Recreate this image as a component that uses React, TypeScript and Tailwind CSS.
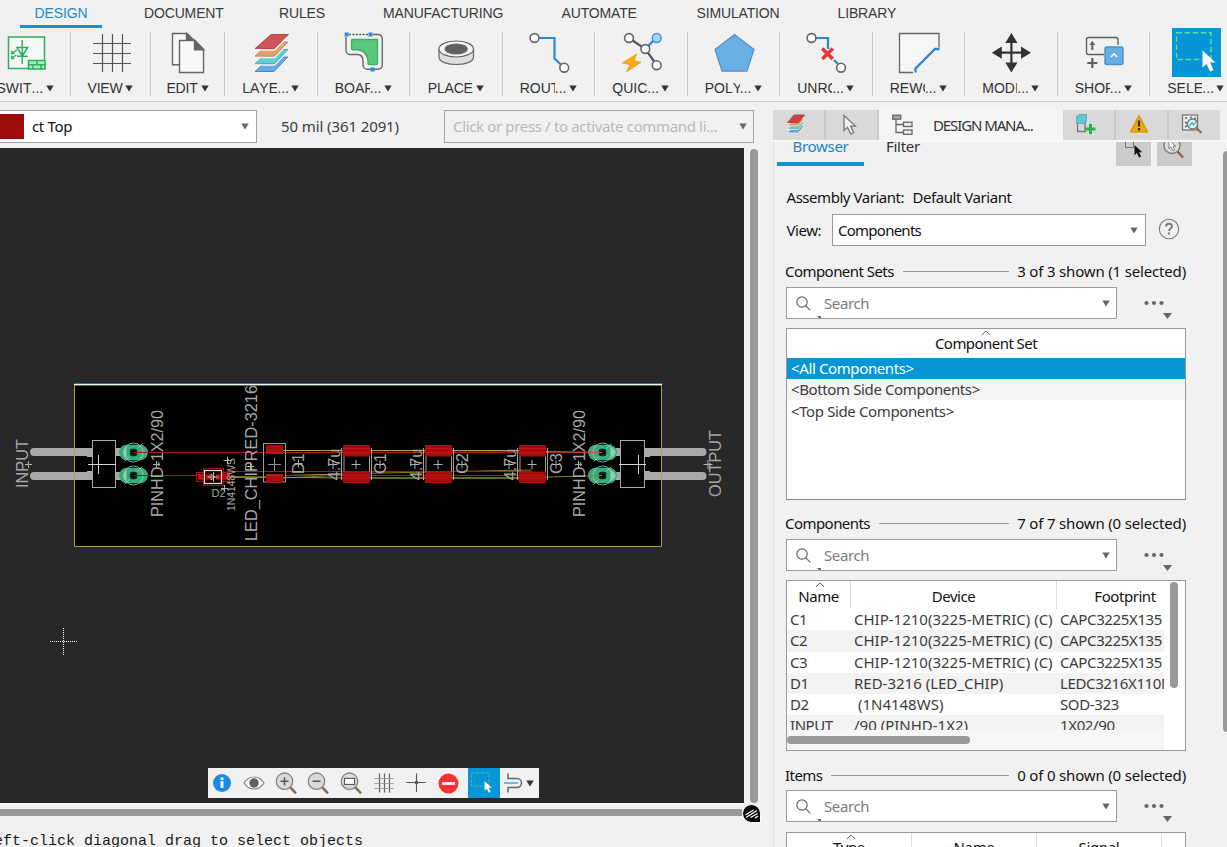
import React from "react";

const SANS = "font-['Noto_Sans','Open_Sans',sans-serif]";
const ARIAL = "font-['Liberation_Sans',Arial,sans-serif]";

function Caret({ className = "" }: { className?: string }) {
  return (
    <svg className={`shrink-0 ${className}`} width="8" height="7" viewBox="0 0 8 7">
      <path d="M0.3 0.5H7.7L4 6.6Z" fill="currentColor" />
    </svg>
  );
}

function Pointer({ x, y, s = 1, fill = "#fff", stroke = "none" }: { x: number; y: number; s?: number; fill?: string; stroke?: string }) {
  return (
    <path
      transform={`translate(${x} ${y}) scale(${s})`}
      d="M0 0V17L4 13.4L7.6 21L11 19.4L7.6 12H13Z"
      fill={fill}
      stroke={stroke}
      strokeWidth="1.5"
    />
  );
}

const ring = { fill: "#fff", stroke: "#666", strokeWidth: 1.6 };

const icons: Record<string, React.ReactNode> = {
  swit: (
    <g fill="none" stroke="#2bb05c" strokeWidth="1.5">
      <rect x="6.500" y="8" width="36" height="31.500" fill="#f4faf5" />
      <path d="M20.300 11V35M15 18.500H25.600L20.300 27ZM15 27.300H25.600" />
      <path d="M15 21L10 24.500M14.500 26L10 29" />
      <path d="M9.500 25V21.800L12.500 24.800ZM9.500 30V26.600L12.500 29.600Z" fill="#2bb05c" strokeWidth="0.800" />
      <rect x="26.500" y="31.500" width="16.500" height="8.500" fill="#a5efbd" />
      <path d="M26.500 35.700H43M35 31.500V35.700M31 35.700V40M39 35.700V40" />
    </g>
  ),
  view: <path d="M15.500 5V43M25.500 5V43M35.500 5V43M6 14.500H44M6 24.500H44M6 34.500H44" stroke="#555" strokeWidth="1.200" fill="none" />,
  edit: (
    <g fill="none" stroke="#666" strokeWidth="1.400">
      <path d="M15 35.800H8.500V4.500H23L28.500 10" fill="#f8f8f8" />
      <path d="M22.500 4.500V10.300H29Z" fill="#666" />
      <path d="M15.500 11.500H31L39.500 20.500V43.500H15.500Z" fill="#f8f8f8" />
      <path d="M30.500 11.500V20.800H39.800Z" fill="#666" />
    </g>
  ),
  laye: (
    <g strokeWidth="0.900">
      <path d="M24 28H41L27 42.500H8Z" fill="#64ace4" stroke="#3e83c0" />
      <path d="M24 20.500H41L27 34.800H8Z" fill="#62cfd6" stroke="#3aa3aa" />
      <path d="M6 33L10 29.500L12 27.200H27L41 13V17L27 31H8Z" fill="none" />
      <path d="M24 13H41L27 27.200H8Z" fill="#e9a06a" stroke="#c77a42" />
      <path d="M24 5.500H41.500L27 19.700H8Z" fill="#cb5557" stroke="#a84244" />
      <path d="M8 21H27.500L41.500 7M8 28.500H27.500L41.500 14.500M8 36H27.500L41.500 22" fill="none" stroke="#f1f1f1" strokeWidth="1.300" />
    </g>
  ),
  boar: (
    <g fill="none">
      <path d="M9 5.500H29" stroke="#555" strokeWidth="1.300" strokeDasharray="2 1.400" />
      <path d="M33 5.500H38A4.200 4.200 0 0 1 42.300 9.700V36A4.200 4.200 0 0 1 38 40.300H27.500A4.500 4.500 0 0 1 23 36V32C23 27.500 20.500 25.500 17 25.500H10A4 4 0 0 1 6 21.500V8" stroke="#666" strokeWidth="1.400" />
      <path d="M12 10.500H37.500V34.500Q37.500 35.500 36.500 35.500H29Q28 35.500 28 34.500V32Q27 21 17 20.700H12.500Q11.500 20.700 11.500 19.700V11Z" fill="#5ac77f" stroke="#3fae67" strokeWidth="1.400" />
      <path d="M4.600 3.600h4v4h-4zM28.500 3.600h4v4h-4zM30.600 38.600h4v4h-4z" fill="#2b8cdc" />
    </g>
  ),
  place: (
    <g stroke="#666" strokeWidth="1.200">
      <path d="M7 20V28C7 38 41.500 38 41.500 28V20Z" fill="#dedede" />
      <ellipse cx="24.200" cy="20" rx="17.300" ry="8" fill="#f7f7f7" />
      <ellipse cx="24.200" cy="20" rx="11" ry="5" fill="#606060" />
    </g>
  ),
  rout: (
    <g>
      <path d="M12 9H29.500V29.500L37 36.500" fill="none" stroke="#2b87d3" strokeWidth="2.200" />
      <circle cx="9.500" cy="9" r="4.400" {...ring} />
      <circle cx="39.200" cy="38.700" r="4.400" {...ring} />
    </g>
  ),
  quic: (
    <g>
      <path d="M12 9L28.300 20L39.700 36" stroke="#555" strokeWidth="2.200" fill="none" />
      <path d="M28.300 20L39 9" stroke="#2b87d3" strokeWidth="2.200" />
      <circle cx="12" cy="9" r="4.400" {...ring} />
      <circle cx="28.300" cy="20" r="4.400" {...ring} />
      <circle cx="39.700" cy="36.200" r="4.400" {...ring} />
      <circle cx="39.700" cy="9" r="4.400" fill="#a9d4f5" stroke="#3c93dc" strokeWidth="1.500" />
      <path d="M19.700 25L5.300 34L13 35.500L9.700 42.700L24 33.300L17 31.800Z" fill="#fbab13" stroke="#eb9a05" strokeWidth="0.800" />
    </g>
  ),
  poly: <path d="M24.500 5.500L44 20.500L37 42.200H12L5 20.500Z" fill="#68afe5" stroke="#5590c2" strokeWidth="1.200" />,
  unro: (
    <g>
      <path d="M12 9H26V20M32 31L37 36" fill="none" stroke="#2b87d3" strokeWidth="2.200" />
      <circle cx="9.500" cy="9" r="4.400" {...ring} />
      <circle cx="39" cy="38.700" r="4.400" {...ring} />
      <path d="M20.300 19.500L30.800 30M30.800 19.500L20.300 30" stroke="#e53935" strokeWidth="3.600" />
    </g>
  ),
  rewo: (
    <g fill="none">
      <path d="M18 43.500H4.500V4.500H44V18.500" stroke="#666" strokeWidth="1.300" fill="#f6f6f6" />
      <path d="M20.500 43.500V39.500L40 20H44.500" stroke="#2b87d3" strokeWidth="2.300" />
    </g>
  ),
  modi: (
    <g fill="#333">
      <path d="M24.400 4L30.500 14H18.300ZM24.400 43.500L30.500 33.500H18.300ZM4.800 23.700L14.800 17.600V29.800ZM44 23.700L34 17.600V29.800Z" />
      <path d="M24.400 10V38M10 23.700H38" stroke="#333" strokeWidth="2.200" />
    </g>
  ),
  shop: (
    <g fill="none" stroke="#606060" strokeWidth="1.400">
      <path d="M24 25.500H8.500A2 2 0 0 1 6.500 23.500V10.500A2 2 0 0 1 8.500 8.500H36A2 2 0 0 1 38 10.500V16" />
      <path d="M12.300 21V15" strokeWidth="2" />
      <path d="M12.300 11.800L15.200 16H9.400Z" fill="#606060" stroke="none" />
      <path d="M12.300 29V39M7.300 34H17.300" strokeWidth="2.200" />
      <rect x="25" y="18" width="18" height="17.500" rx="2" fill="#66aee6" stroke="#4b8fcb" />
      <path d="M31 28L34 24.800L37 28" stroke="#fff" strokeWidth="1.600" />
    </g>
  ),
  sele: (
    <g>
      <rect width="49" height="49" fill="#0696d7" />
      <rect x="4.500" y="4.800" width="34.500" height="26.700" fill="none" stroke="#5ee09a" strokeWidth="1.400" strokeDasharray="5.500 2.600" />
      <Pointer x={30.500} y={22.500} />
    </g>
  ),
};

const tools: [string, string, boolean, string][] = [
  ["swit", "SWITC", true, "w-[71px] pr-[20px]"],
  ["view", "VIEW", false, "w-[80px]"],
  ["edit", "EDIT", false, "w-[74px]"],
  ["laye", "LAYE", true, "w-[92.5px]"],
  ["boar", "BOAR", true, "w-[92.5px]"],
  ["place", "PLACE", false, "w-[92.5px]"],
  ["rout", "ROUT", true, "w-[92.5px]"],
  ["quic", "QUIC", true, "w-[92.5px]"],
  ["poly", "POLY", true, "w-[92.5px]"],
  ["unro", "UNRO", true, "w-[92.5px]"],
  ["rewo", "REWO", true, "w-[92.5px]"],
  ["modi", "MODI", true, "w-[92.5px]"],
  ["shop", "SHOP", true, "w-[92.5px]"],
  ["sele", "SELE", true, "w-[92.5px]"],
];

function Tool({ id, label, cut, width }: { id: string; label: string; cut: boolean; width: string }) {
  const last = id === "sele";
  return (
    <div className={`flex h-[64px] shrink-0 flex-col items-center ${width} ${last ? "" : "border-r border-[#cbcbcb]"}`}>
      {last ? (
        <svg className="-mt-[4px] shrink-0" width="49" height="49" viewBox="0 0 49 49">
          {icons[id]}
        </svg>
      ) : (
        <svg className="-mt-[3px] ml-[1px] shrink-0" width="48" height="48" viewBox="0 0 48 48">
          {icons[id]}
        </svg>
      )}
      <div className={`mt-[1px] flex h-[20px] items-center text-[14px] text-[#333] [font-kerning:none] ${last ? "-ml-[1px]" : ""}`}>
        {cut ? (
          <>
            <span className="w-[35px] overflow-hidden whitespace-nowrap">{label}</span>
            <span className="w-[14px]">...</span>
          </>
        ) : (
          <span className="mr-[3px] tracking-[-0.2px]">{label}</span>
        )}
        <Caret className="text-[#333]" />
      </div>
    </div>
  );
}

const tabs: [string, string][] = [
  ["DOCUMENT", "w-[79px] ml-[42px]"],
  ["RULES", "w-[46px] ml-[56px]"],
  ["MANUFACTURING", "w-[120px] ml-[58px]"],
  ["AUTOMATE", "w-[75px] ml-[58.5px]"],
  ["SIMULATION", "w-[83px] ml-[60px]"],
  ["LIBRARY", "w-[60px] ml-[58px]"],
];

function VText({ x, y, len, size = 17, children }: { x: number; y: number; len: number; size?: number; children: string }) {
  return (
    <text transform={`translate(${x} ${y}) rotate(-90)`} fontSize={size} textLength={len} lengthAdjust="spacingAndGlyphs" fill="#a6a6a6">
      {children}
    </text>
  );
}

function Cross({ x, y, r = 4.5, c = "#b0b0b0" }: { x: number; y: number; r?: number; c?: string }) {
  return <path d={`M${x - r} ${y}H${x + r}M${x} ${y - r}V${y + r}`} stroke={c} strokeWidth="1" />;
}

function PadHole({ x, y, side }: { x: number; y: number; side: 1 | -1 }) {
  return (
    <g>
      <rect x={x - 14.500} y={y - 7.800} width="29" height="15.600" rx="7.800" fill="#35ad7d" />
      <path d={side === 1 ? `M${x - 9} ${y - 4}Q${x - 12} ${y} ${x - 9} ${y + 4}L${x - 7} ${y + 6}V${y - 6}Z` : `M${x + 8} ${y - 6}L${x + 12} ${y - 3}Q${x + 14} ${y} ${x + 12} ${y + 3}L${x + 8} ${y + 6}Z`} fill="#8fcdb2" />
      <circle cx={x} cy={y} r="9.500" fill="none" stroke="#a5c9ba" strokeWidth="0.800" />
      <rect x={x - 3.800} y={y - 3.800} width="7.600" height="7.600" rx="2.500" fill="#0d2a20" />
      <circle cx={x} cy={y} r="2.300" fill="#050505" />
      <path d={`M${x - 9} ${y + 9}L${x - 4} ${y + 4}M${x + 4} ${y - 4}L${x + 9} ${y - 9}`} stroke="#9bc9b6" strokeWidth="0.800" />
    </g>
  );
}

function Cap({ x }: { x: number }) {
  return (
    <g>
      <path d={`M${x - 15} 448V480M${x + 15} 448V480M${x - 12.500} 456V472M${x + 13} 456V472`} stroke="#b5b5a8" strokeWidth="0.900" />
      <rect x={x - 13.500} y="445" width="27" height="11.500" fill="#a80c0e" />
      <rect x={x - 13.500} y="471.500" width="27" height="11.500" fill="#a80c0e" />
      <path d={`M${x - 13.500} 448.500H${x + 13.500}M${x - 13.500} 452.500H${x + 13.500}M${x - 13.500} 475.500H${x + 13.500}M${x - 13.500} 478H${x + 13.500}`} stroke="#d01a1a" strokeWidth="0.700" />
      <Cross x={x - 0.500} y={464.500} />
    </g>
  );
}

function Board() {
  return (
    <svg className="block" width="744" height="655" viewBox="0 148 744 655" fontFamily="'Liberation Sans', Arial, sans-serif">
      <rect x="74.500" y="384.500" width="587" height="162" fill="#000" />
      <g stroke="#a9a9a9" strokeWidth="8" strokeLinecap="round">
        <path d="M34 452H124M34 476H124M612 452H702.500M612 476H702.500" />
      </g>
      <path d="M74.500 385V546.500H661.500V385" fill="none" stroke="#b39c50" />
      <path d="M74 383.500H662.500" stroke="#4468b4" />
      <path d="M74 384.500H662" stroke="#eef6f4" />
      <path d="M75 385.500H661" stroke="#6d8f6d" strokeWidth="0.800" />
      <rect x="92.500" y="440.500" width="23" height="47" fill="#000" stroke="#a9a9a9" />
      <rect x="620.500" y="440.500" width="24" height="47" fill="#000" stroke="#a9a9a9" />
      <path d="M87 456.500H93M87 471.500H93M644 456.500H650M644 471.500H650" stroke="#a9a9a9" />
      <path d="M88 464.500H116M98.500 455V474M619 464.500H646M638.500 455V474" stroke="#d5d5d5" />
      <PadHole x={133.500} y={452.500} side={1} />
      <PadHole x={133.500} y={475.500} side={1} />
      <PadHole x={602.500} y={452.500} side={-1} />
      <PadHole x={602.500} y={475.500} side={-1} />
      <g fill="none" strokeWidth="1">
        <path d="M275 450.500L520 451M356 478H520M283 478L356 474.500" stroke="#77752c" />
        <path d="M283 450.500H341M372 450.500H425M452 450.500H519" stroke="#a8a04a" />
        <path d="M222 476.500L343 478H519" stroke="#9a982a" />
        <path d="M230 477.500H275M356 473.500L532 470M532 477.500L602 475.500" stroke="#85821f" />
        <path d="M285 475.500L343 474" stroke="#d07a30" />
        <path d="M133.500 452.500H602M133.500 475.500H213L228 471.500H532M285 475.500H519" stroke="#a51a1a" />
        <path d="M546 451.500L602 452.500" stroke="#c86030" />
      </g>
      <rect x="263.500" y="443.500" width="22" height="38.500" fill="none" stroke="#9a9a9a" />
      <rect x="266" y="445" width="17" height="9" fill="#a80c0e" />
      <rect x="266" y="474" width="17" height="9" fill="#a80c0e" />
      <path d="M266 452.500H283M266 475.500H283" stroke="#d22" strokeWidth="0.800" />
      <Cross x={274.500} y={464.500} r={6.500} c="#909090" />
      <Cap x={356.500} />
      <Cap x={438.500} />
      <Cap x={532.500} />
      <rect x="196.500" y="472.500" width="8" height="9" fill="#300" stroke="#b01010" />
      <rect x="221.500" y="472.500" width="8" height="9" fill="#300" stroke="#b01010" />
      <rect x="203.500" y="468.500" width="20" height="17" fill="none" stroke="#a01010" />
      <rect x="198" y="474" width="31" height="5.500" fill="#b80d0d" />
      <rect x="204.500" y="470.500" width="17" height="13" fill="#180000" stroke="#eadada" strokeWidth="1.200" />
      <path d="M199 476.800H204M205.500 477H210M216 477H221" stroke="#c01414" strokeWidth="5" />
      <path d="M208 477H218M213.500 472V482M211 474V480L215 477Z" stroke="#f0c0b0" fill="none" strokeWidth="0.900" />
      <VText x={28.300} y={488} len={49}>INPUT</VText>
      <VText x={163} y={517} len={107}>PINHD-1X2/90</VText>
      <VText x={257} y={541} len={156}>LED_CHIPRED-3216</VText>
      <VText x={304} y={474} len={21}>D1</VText>
      <VText x={340} y={480.500} len={32}>4.7u</VText>
      <VText x={386} y={474} len={21}>C1</VText>
      <VText x={421.500} y={480.500} len={32}>4.7u</VText>
      <VText x={468} y={474} len={21}>C2</VText>
      <VText x={515.500} y={480.500} len={32}>4.7u</VText>
      <VText x={562} y={474} len={21}>C3</VText>
      <VText x={585} y={517} len={107}>PINHD-1X2/90</VText>
      <VText x={721} y={497} len={67}>OUTPUT</VText>
      <VText x={235} y={511} size={11} len={53}>1N4148WS</VText>
      <text x="211.500" y="497" fontSize="11" textLength="14" fill="#a6a6a6">D2</text>
      <g>
        <Cross x={28.500} y={464.500} r={3.500} />
        <Cross x={156.500} y={464.500} r={3.500} />
        <Cross x={250.500} y={466.500} r={3.500} />
        <Cross x={298.500} y={463.500} r={4} />
        <Cross x={333} y={464.500} r={4.500} />
        <Cross x={380} y={464.500} r={4} />
        <Cross x={415} y={464.500} r={4.500} />
        <Cross x={462} y={464.500} r={4} />
        <Cross x={509} y={464.500} r={4.500} />
        <Cross x={556} y={464.500} r={4} />
        <Cross x={578.500} y={464.500} r={3.500} />
        <Cross x={708} y={464.500} r={4.500} />
        <Cross x={227.500} y={460.500} r={4} />
        <Cross x={224.500} y={488.500} r={3.500} />
      </g>
      <path d="M50 641.500H77M63.500 628V655" stroke="#fff" strokeDasharray="1 1" />
    </svg>
  );
}

function Lens({ children }: { children?: React.ReactNode }) {
  return (
    <svg className="-ml-[3px] -mt-[1px]" width="24" height="24" viewBox="0 0 24 24">
      <path d="M16 16L22 22.300" stroke="#84694a" strokeWidth="2.400" />
      <circle cx="10.500" cy="10.200" r="8.200" fill="#dadada" stroke="#858585" strokeWidth="1.300" />
      <g stroke="#555" fill="none" strokeWidth="1.500">{children}</g>
    </svg>
  );
}

function ViewBar() {
  return (
    <div className="absolute left-[208px] top-[620px] flex h-[30px] w-[331px] items-center bg-[#f1f1f1]">
      <div className="flex w-[28px] justify-center">
        <svg width="20" height="20" viewBox="0 0 20 20">
          <circle cx="10" cy="10" r="9" fill="#1a8be3" />
          <path d="M8.600 8.300H11.400V15H8.600ZM8.600 4.500H11.400V7H8.600Z" fill="#fff" />
        </svg>
      </div>
      <div className="flex w-[36px] justify-center">
        <svg width="22" height="16" viewBox="0 0 22 16">
          <path d="M1 8C6 0 16 0 21 8C16 16 6 16 1 8Z" fill="#fafafa" stroke="#888" strokeWidth="1.200" />
          <circle cx="11" cy="8" r="4.700" fill="#606060" />
        </svg>
      </div>
      <div className="flex w-[31px] justify-center"><Lens><path d="M6.500 10.200H14.500M10.500 6.200V14.200" /></Lens></div>
      <div className="flex w-[33px] justify-center"><Lens><path d="M6.500 10.200H14.500" /></Lens></div>
      <div className="flex w-[32px] justify-center"><Lens><rect x="5.500" y="7.400" width="10" height="6" strokeWidth="1.100" fill="#fff" /></Lens></div>
      <div className="flex w-[32px] justify-center">
        <svg width="20" height="20" viewBox="0 0 20 20" stroke="#606060" fill="none">
          <path d="M5.500 0.500V19.500M10.500 0.500V19.500M15.500 0.500V19.500" strokeWidth="1.200" />
          <path d="M0.500 5.500H19.500M0.500 10.500H19.500M0.500 15.500H19.500" strokeWidth="0.900" stroke="#999" />
        </svg>
      </div>
      <div className="flex w-[32px] justify-center">
        <svg width="20" height="20" viewBox="0 0 20 20" stroke="#555" fill="none">
          <path d="M0.500 9.500H8M13 9.500H19.500M10.500 0.500V7M10.500 12V19" strokeWidth="1.100" />
          <path d="M8 9.500H13M10.500 7V12" strokeWidth="1" />
          <rect x="9.500" y="8.500" width="2" height="2" fill="#555" />
        </svg>
      </div>
      <div className="flex w-[36px] justify-center pr-[3px]">
        <svg width="21" height="21" viewBox="0 0 21 21">
          <circle cx="10.500" cy="10.500" r="10" fill="#fc3033" />
          <path d="M4 10.500H17" stroke="#fff" strokeWidth="2.800" />
        </svg>
      </div>
      <svg className="shrink-0" width="32" height="30" viewBox="0 0 32 30">
        <rect width="32" height="30" fill="#0696d7" />
        <rect x="3.500" y="5" width="17.500" height="13" fill="none" stroke="#4bbd9c" strokeDasharray="3 1.700" />
        <Pointer x={16.500} y={13} s={0.560} />
      </svg>
      <svg className="ml-[4px] shrink-0" width="20" height="22" viewBox="0 0 20 22" fill="none">
        <path d="M4 1.500V6.500H13A4.500 4.500 0 0 1 13 15.500H4V20.500" stroke="#666" strokeWidth="1.500" />
        <path d="M0 11H14" stroke="#4b9fe4" strokeWidth="1.500" />
      </svg>
      <Caret className="ml-[2px] text-[#333]" />
    </div>
  );
}

function Section({ title, count, top }: { title: string; count: string; top: string }) {
  return (
    <div className={`-ml-px flex h-[20px] w-[401px] items-center text-[15px] text-[#111] ${top}`}>
      <span className="tracking-[-0.55px]">{title}</span>
      <span className="ml-[9px] mr-[8px] h-px grow bg-[#9a9a9a]" />
      <span className="tracking-[-0.17px]">{count}</span>
    </div>
  );
}

function SearchRow({ top }: { top: string }) {
  return (
    <div className={`flex h-[32px] ${top}`}>
      <div className="flex w-[331px] items-center border border-[#9c9c9c] bg-white pl-[9px] pr-[6px]">
        <svg width="15" height="15" viewBox="0 0 15 15" fill="none" stroke="#666" strokeWidth="1.200">
          <circle cx="6" cy="6" r="5.200" />
          <path d="M9.700 9.700L14.300 14.300" />
        </svg>
        <div className="flex h-full flex-col justify-end pl-[6px]">
          <svg width="4" height="3" viewBox="0 0 4 3"><path d="M0 1H4V3H2Z" fill="#666" /></svg>
        </div>
        <span className="ml-[3px] grow text-[15px] tracking-[-0.4px] text-[#7c7c7c]">Search</span>
        <Caret className="text-[#666]" />
      </div>
      <svg className="ml-[27px] mt-[11px]" width="28" height="22" viewBox="0 0 28 22" fill="#666">
        <circle cx="2.500" cy="5" r="2.100" />
        <circle cx="10" cy="5" r="2.100" />
        <circle cx="17.500" cy="5" r="2.100" />
        <path d="M19 15H28L23.500 21Z" />
      </svg>
    </div>
  );
}

function SortMark({ left }: { left: string }) {
  return (
    <svg className={`absolute top-[1px] ${left}`} width="10" height="6" viewBox="0 0 10 6">
      <path d="M0.800 5L5 1L9.200 5" fill="none" stroke="#666" />
    </svg>
  );
}

const parts = [
  ["C1", "CHIP-1210(3225-METRIC) (C)", "CAPC3225X135"],
  ["C2", "CHIP-1210(3225-METRIC) (C)", "CAPC3225X135"],
  ["C3", "CHIP-1210(3225-METRIC) (C)", "CAPC3225X135"],
  ["D1", "RED-3216 (LED_CHIP)", "LEDC3216X110N"],
  ["D2", "\u00a0(1N4148WS)", "SOD-323"],
  ["INPUT", "/90 (PINHD-1X2)", "1X02/90"],
];

function Panel() {
  return (
    <div className={`flex w-[454px] flex-col ${SANS}`}>
      <div className="mt-[8px] flex h-[30px] w-[447px] shrink-0 bg-[#cacaca]">
        <div className="flex w-[51px] items-center justify-center bg-[#d9d9d9]">
          <svg className="-ml-[5px] -mt-[3px]" width="22" height="22" viewBox="0 0 22 22" strokeWidth="0.800">
            <path d="M9 12H19.500L13.500 20H2.500Z" fill="#62a5dc" stroke="#eee" />
            <path d="M9 9H19.500L13.500 16.500H2.500Z" fill="#60c4ca" stroke="#eee" />
            <path d="M9 5.500H19.500L13.500 13H2.500Z" fill="#e39a66" stroke="#eee" />
            <path d="M9 2H19.500L13.500 9.500H2.500Z" fill="#c94448" stroke="#a83a3d" />
          </svg>
        </div>
        <div className="ml-[2px] flex w-[51px] items-center justify-center bg-[#d9d9d9]">
          <svg className="-ml-[4px]" width="16" height="22" viewBox="0 0 16 22">
            <Pointer x={2} y={1.500} s={0.880} fill="#f2f2f2" stroke="#777" />
          </svg>
        </div>
        <div className="ml-[2px] flex w-[184px] items-center bg-[#f5f5f5] pl-[13px]">
          <svg className="-mt-[2px]" width="21" height="21" viewBox="0 0 21 21" fill="#ededed" stroke="#666" strokeWidth="1.300">
            <path d="M4 5.500V18.500H12M4 10.500H12" fill="none" />
            <rect x="0.700" y="1.200" width="8" height="4" fill="#aaa" />
            <rect x="11.500" y="8.200" width="8.500" height="4.300" />
            <rect x="11.500" y="16" width="8.500" height="4.300" />
          </svg>
          <span className="ml-[20px] whitespace-nowrap text-[15px] tracking-[-1.1px] text-[#333]">DESIGN MANA...</span>
        </div>
        <div className="flex w-[51px] items-center justify-center bg-[#d9d9d9]">
          <svg className="-ml-[5px] -mt-[2px]" width="22" height="22" viewBox="0 0 22 22">
            <path d="M2.500 10V18.500H11M10 3V19" fill="none" stroke="#777" strokeWidth="1.300" />
            <path d="M1.500 4L4 1.500H11.500V8L9 10.500H1.500Z" fill="#5fc8d2" stroke="#4a9fa8" strokeWidth="0.700" />
            <path d="M15.500 11V21M10.500 16H20.500" stroke="#2ab04a" strokeWidth="3" />
          </svg>
        </div>
        <div className="ml-[2px] flex w-[51px] items-center justify-center bg-[#d9d9d9]">
          <svg className="-ml-[5px] -mt-[2px]" width="20" height="20" viewBox="0 0 20 20">
            <path d="M10 2L18.500 18H1.500Z" fill="#eba90c" stroke="#dd9c0a" strokeWidth="1.600" strokeLinejoin="round" />
            <path d="M10 6.500V12.500M10 14V16.500" stroke="#333" strokeWidth="2.200" />
          </svg>
        </div>
        <div className="ml-[2px] flex w-[51px] items-center justify-center bg-[#d9d9d9]">
          <svg className="-ml-[6px] -mt-[2px]" width="22" height="22" viewBox="0 0 22 22" fill="none" stroke="#777">
            <rect x="1.500" y="2" width="15" height="15" fill="#eee" strokeWidth="1.300" />
            <path d="M4 5h2M4 9l3 2M4 14l3-2M9 4.500h2M14 4.500v3" strokeWidth="2" />
            <path d="M15.500 15L20.500 20" stroke="#8c7355" strokeWidth="2.200" />
            <circle cx="11.500" cy="11" r="5" fill="#e3f3f0" strokeWidth="1.300" />
            <path d="M8.500 12.500L11 9.500L12.500 12L14.500 9" stroke="#35a99a" strokeWidth="1.200" />
          </svg>
        </div>
      </div>
      <div className="h-[2px] shrink-0 bg-[#f8f8f8]" />
      <div className="flex min-h-0 grow justify-between border-l border-[#e2e2e2]">
        <div className="flex w-[420px] flex-col overflow-hidden pl-[12px]">
          <div className="-ml-[9px] flex h-[24px] shrink-0 overflow-hidden text-[15px] tracking-[-0.3px]">
            <div className="h-[24px] w-[87px] overflow-hidden border-b-[4px] border-[#1391d2] text-center text-[#1a87c4]">
              <div className="-mt-[6px] leading-[20px]">Browser</div>
            </div>
            <div className="-mt-[6px] ml-[22px] w-[230px] leading-[20px] text-[#333]">Filter</div>
            <svg className="block" width="77" height="24" viewBox="0 0 77 24">
              <rect width="35" height="24" fill="#cbcbcb" />
              <rect x="41" width="35" height="24" fill="#cbcbcb" />
              <path d="M9.500 0V5.500H17.500V0" fill="none" stroke="#777" />
              <Pointer x={18.500} y={3} s={0.600} fill="#111" />
              <path d="M61 9L67 15.500" stroke="#84694a" strokeWidth="2.400" />
              <circle cx="56" cy="3.500" r="8" fill="#ddd" stroke="#777" strokeWidth="1.300" />
              <Pointer x={53} y={-2} s={0.520} fill="#fff" stroke="#666" />
            </svg>
          </div>
          <div className="mt-[21px] flex h-[20px] shrink-0 items-center pl-[0.500px] text-[15px] tracking-[-0.46px] text-[#111]">
            <span>Assembly Variant:</span>
            <span className="ml-[8.500px]">Default Variant</span>
          </div>
          <div className="mt-[7px] flex h-[32px] shrink-0 items-center text-[15px] tracking-[-0.45px] text-[#111]">
            <span className="w-[46px] pl-[0.500px]">View:</span>
            <div className="flex h-[32px] w-[314px] items-center justify-between border border-[#999] bg-white pl-[5px] pr-[7px]">
              <span className="tracking-[-0.750px]">Components</span>
              <Caret className="text-[#666]" />
            </div>
            <svg className="-mt-[2px] ml-[12px]" width="22" height="22" viewBox="0 0 22 22">
              <circle cx="11" cy="11" r="9.700" fill="none" stroke="#777" strokeWidth="1.100" />
              <path d="M8 8.500C8 4.800 14 4.800 14 8.300C14 10.500 11 10.500 11 13M11 14.500V16.500" fill="none" stroke="#777" strokeWidth="1.900" />
            </svg>
          </div>
          <div className="flex flex-col">
            <Section title="Component Sets" count="3 of 3 shown (1 selected)" top="mt-[15px]" />
            <SearchRow top="mt-[6px]" />
            <div className="relative mt-[9px] h-[172px] w-[400px] border border-[#999] border-b-[#888] bg-white text-[15px] tracking-[-0.38px] text-[#3c3c3c]">
              <SortMark left="left-[194px]" />
              <div className="h-[29px] text-center leading-[29px] tracking-[-0.55px] text-[#111]">Component Set</div>
              <div className="h-[21px] bg-[#0696d7] pl-[4px] leading-[21px] text-white">&lt;All Components&gt;</div>
              <div className="h-[21px] bg-[#f4f4f4] pl-[4px] leading-[21px]">&lt;Bottom Side Components&gt;</div>
              <div className="h-[21px] pl-[4px] leading-[23px]">&lt;Top Side Components&gt;</div>
            </div>
            <Section title="Components" count="7 of 7 shown (0 selected)" top="mt-[13px]" />
            <SearchRow top="mt-[6px]" />
            <div className="relative mt-[9px] flex h-[171px] w-[400px] flex-col border border-[#999] bg-white text-[15px] tracking-[-0.45px] text-[#3c3c3c]">
              <SortMark left="left-[28px]" />
              <div className="flex">
                <div className="h-[149px] w-[377px] overflow-hidden">
                  <div className="flex h-[28px] w-[420px] text-center leading-[30px] text-[#111]">
                    <div className="w-[64px] border-r border-[#ddd]">Name</div>
                    <div className="w-[206px] border-r border-[#ddd]">Device</div>
                    <div className="w-[136px]">Footprint</div>
                  </div>
                  {parts.map((p, i) => (
                    <div key={p[0]} className={`flex h-[21.300px] w-[420px] whitespace-nowrap leading-[21px] ${i % 2 ? "bg-[#f3f3f3]" : "bg-white"}`}>
                      <div className="w-[67px] pl-[3px]">{p[0]}</div>
                      <div className="w-[206px] tracking-[0px]">{p[1]}</div>
                      <div className="w-[140px] tracking-[-0.370px]">{p[2]}</div>
                    </div>
                  ))}
                </div>
                <div className="ml-[6px] mt-[1px] h-[106px] w-[8px] rounded-[4px] bg-[#999]" />
              </div>
              <div className="flex h-[20px] w-[377px] items-center bg-[#f6f6f6]">
                <div className="h-[8px] w-[183px] rounded-[4px] bg-[#999]" />
              </div>
            </div>
            <Section title="Items" count="0 of 0 shown (0 selected)" top="mt-[14px]" />
            <SearchRow top="mt-[5px]" />
            <div className="relative mt-[10px] flex h-[40px] w-[400px] shrink-0 border border-[#999] bg-white text-center text-[15px] leading-[28px] tracking-[-0.35px] text-[#111]">
              <SortMark left="left-[59px]" />
              <div className="w-[125px] border-r border-[#ddd]">Type</div>
              <div className="w-[125px] border-r border-[#ddd]">Name</div>
              <div className="w-[125px] border-r border-[#ddd]">Signal</div>
            </div>
          </div>
        </div>
        <div className="mt-[9px] h-[581px] w-[4px] rounded-l-[4px] bg-[#999]" />
      </div>
    </div>
  );
}

export default function App() {
  return (
    <div className={`flex h-[847px] w-[1227px] flex-col overflow-hidden bg-[#f1f1f1] ${ARIAL}`}>
      <div className="flex h-[28px] shrink-0 text-[14px] leading-[27px] tracking-[-0.15px] text-[#3a3a3a]">
        <div className="ml-[20px] h-[28px] w-[82px] border-b-[3px] border-[#1391d2] text-center text-[#1a8bc9]">DESIGN</div>
        {tabs.map(([label, cls]) => (
          <div key={label} className={`whitespace-nowrap ${cls}`}>{label}</div>
        ))}
      </div>
      <div className="flex h-[74px] shrink-0 overflow-hidden border-b border-[#c9c9c9] pt-[4px]">
        {tools.map(([id, label, cut, width]) => (
          <Tool key={id} id={id} label={label} cut={cut} width={width} />
        ))}
      </div>
      <div className="flex min-h-0 grow">
        <div className="flex w-[773px] flex-col">
          <div className={`flex h-[46px] shrink-0 pt-[8px] text-[15px] tracking-[-0.35px] ${SANS}`}>
            <div className="flex h-[33px] w-[257px] items-center border border-l-0 border-[#a4a4a4] bg-white pr-[7px] text-[#111]">
              <div className="h-[25px] w-[24px] bg-[#a00a0c]" />
              <span className="ml-[8px] grow">ct Top</span>
              <Caret className="text-[#666]" />
            </div>
            <span className="ml-[24px] w-[163px] leading-[33px] tracking-[-0.1px] text-[#3c3c3c]">50 mil (361 2091)</span>
            <div className="flex h-[33px] w-[310px] items-center justify-between border border-[#a4a4a4] pl-[8px] pr-[6px] text-[#b9b9b9]">
              <span>Click or press / to activate command li...</span>
              <Caret className="text-[#666]" />
            </div>
          </div>
          <div className="flex h-[655px] shrink-0">
            <div className="relative h-[655px] w-[744px] bg-[#282828]">
              <Board />
              <ViewBar />
            </div>
            <div className="ml-[6px] mt-[1px] h-[654px] w-[8px] rounded-[4px] bg-[#999]" />
          </div>
          <div className="flex h-[22px] shrink-0">
            <div className="mt-[6px] h-[7px] w-[742px] bg-[#999]" />
            <svg className="mt-[1px]" width="20" height="20" viewBox="0 0 20 20">
              <path d="M9.500 0.500A9 9 0 0 1 18.500 9.500V18.500H9.500A9 9 0 0 1 9.500 0.500Z" fill="#080808" stroke="#fff" />
              <path d="M3.500 11L11.500 6M4 13.500L15 6.500M8.500 13.500L15.500 9.500M13 14L16 12" stroke="#fff" strokeWidth="1.200" />
            </svg>
          </div>
          <div className="-ml-[6px] mt-[7px] whitespace-pre font-['Liberation_Mono','Courier_New',monospace] text-[15px] leading-[20px] text-[#1a1a1a]">eft-click diagonal drag to select objects</div>
        </div>
        <Panel />
      </div>
    </div>
  );
}
